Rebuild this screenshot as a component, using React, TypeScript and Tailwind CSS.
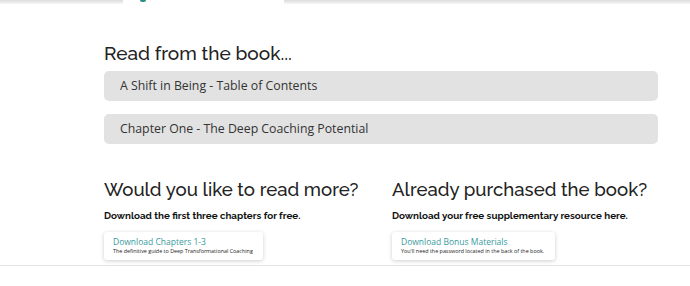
import React from "react";

export default function App() {
  return (
    <div className="relative w-[690px] h-[286px] bg-white overflow-hidden" style={{ fontFamily: '"Open Sans", sans-serif' }}>
      {/* top shadow strip */}
      <div className="h-[4px] w-full bg-gradient-to-b from-[#dcdcdc] to-[#f7f7f7]" />
      <div className="absolute left-[123px] top-0 w-[161px] h-[5px] bg-white">
        <div className="absolute left-[17px] top-0 w-[6px] h-[2px] rounded-b-full bg-[#2f8f84]" />
      </div>

      <div className="w-[554px] ml-[104px] pt-[36px]">
        <h2 className="text-[19px] leading-[26px] font-medium text-[#222]" style={{ fontFamily: 'Raleway, Lato, sans-serif' }}>
          Read from the book...
        </h2>
        <div className="mt-[5px] flex flex-col gap-[13px]">
          <div className="h-[30px] rounded-[5px] bg-[#e2e2e2] pl-[16px] flex items-center text-[12.3px] text-[#333]">
            A Shift in Being - Table of Contents
          </div>
          <div className="h-[30px] rounded-[5px] bg-[#e2e2e2] pl-[16px] flex items-center text-[12.3px] text-[#333]">
            Chapter One - The Deep Coaching Potential
          </div>
        </div>

        <div className="mt-[33px] grid grid-cols-[288px_1fr]">
          <div>
            <h2 className="text-[18.6px] leading-[26px] font-medium text-[#222]" style={{ fontFamily: 'Raleway, Lato, sans-serif' }}>
              Would you like to read more?
            </h2>
            <p className="mt-[6px] text-[9.8px] leading-[14px] font-bold text-[#111]" style={{ fontFamily: 'Raleway, Lato, sans-serif' }}>
              Download the first three chapters for free.
            </p>
            <div className="mt-[9px] w-[159px] h-[28px] bg-white rounded-[3px] shadow-[0_1px_4px_rgba(0,0,0,0.2)] pl-[9px] pt-[4px]">
              <div className="text-[8.5px] leading-[11px] text-[#3a9aa0]">Download Chapters 1-3</div>
              <div className="text-[5.4px] leading-[8px] text-[#222]">The definitive guide to Deep Transformational Coaching</div>
            </div>
          </div>
          <div>
            <h2 className="text-[18.6px] leading-[26px] font-medium text-[#222]" style={{ fontFamily: 'Raleway, Lato, sans-serif' }}>
              Already purchased the book?
            </h2>
            <p className="mt-[6px] text-[9.8px] leading-[14px] font-bold text-[#111]" style={{ fontFamily: 'Raleway, Lato, sans-serif' }}>
              Download your free supplementary resource here.
            </p>
            <div className="mt-[9px] w-[163px] h-[28px] bg-white rounded-[3px] shadow-[0_1px_4px_rgba(0,0,0,0.2)] pl-[9px] pt-[4px]">
              <div className="text-[8.5px] leading-[11px] text-[#3a9aa0]">Download Bonus Materials</div>
              <div className="text-[5.4px] leading-[8px] text-[#222]">You'll need the password located in the back of the book.</div>
            </div>
          </div>
        </div>
      </div>

      <div className="absolute left-0 top-[265px] w-full h-[21px] bg-white border-t border-[#e3e3e3]" />
    </div>
  );
}
